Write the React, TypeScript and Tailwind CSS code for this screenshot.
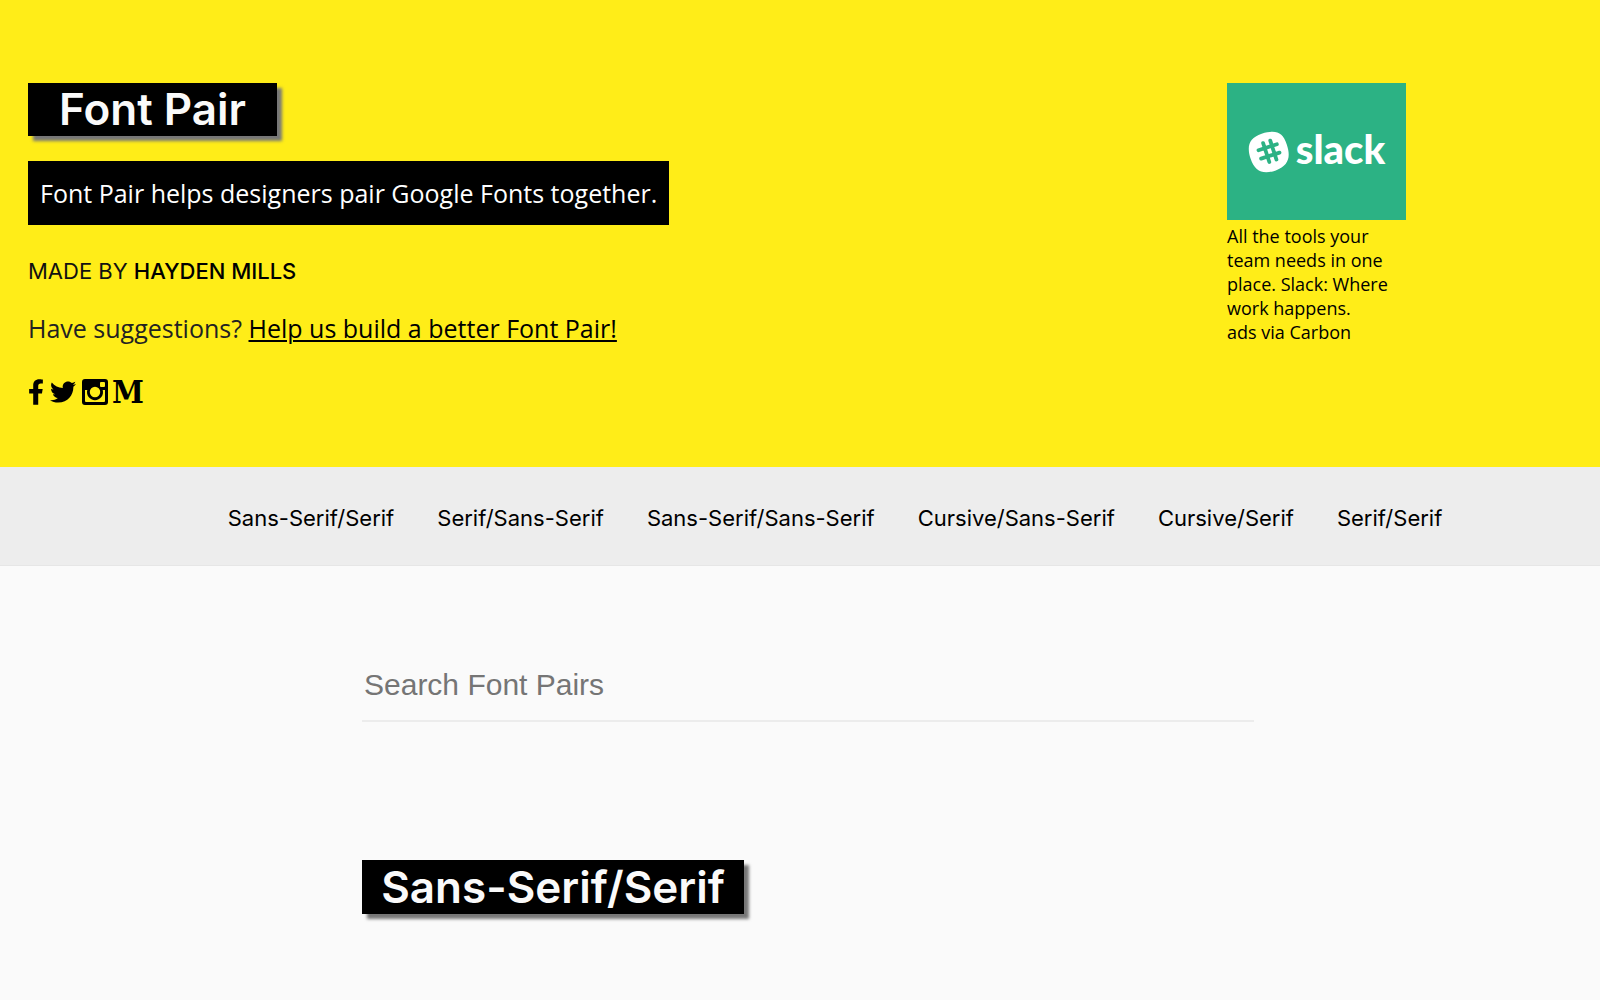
import React from 'react';
import { FaFacebookF, FaTwitter } from 'react-icons/fa';

const categories = [
  'Sans-Serif/Serif',
  'Serif/Sans-Serif',
  'Sans-Serif/Sans-Serif',
  'Cursive/Sans-Serif',
  'Cursive/Serif',
  'Serif/Serif',
];

const InstagramIcon: React.FC = () => (
  <svg viewBox="0 0 26 26" className="w-[26px] h-[26px]" fill="currentColor" aria-hidden="true">
    <path
      fillRule="evenodd"
      d="M3 0h20a3 3 0 0 1 3 3v20a3 3 0 0 1-3 3H3a3 3 0 0 1-3-3V3a3 3 0 0 1 3-3Zm16 3a1 1 0 0 0-1 1v3a1 1 0 0 0 1 1h3a1 1 0 0 0 1-1V4a1 1 0 0 0-1-1h-3ZM3 11v11a1 1 0 0 0 1 1h18a1 1 0 0 0 1-1V11h-2.300a8 8 0 1 1-15.400 0H3Zm10-3.200a5.200 5.200 0 1 0 0 10.400 5.200 5.200 0 0 0 0-10.400Z"
    />
  </svg>
);

const SlackMark: React.FC = () => (
  <svg viewBox="0 0 40 40" className="w-[42px] h-[42px] shrink-0" aria-hidden="true">
    <path
      fill="#fff"
      d="M13 2.500C27-1.500 33 1 37 13s1.500 20-10.500 24.500S6.500 38.500 2.500 26.500 1 6.500 13 2.500Z"
    />
    <path
      stroke="#2cb284"
      strokeWidth="3.600"
      strokeLinecap="round"
      d="M14.400 11.500l5.900 18M21.200 9.200l5.900 18M10 18.300l17.500-5.700M12.500 26.300l17.500-5.700"
    />
  </svg>
);

const App: React.FC = () => {
  return (
    <div className="min-h-screen bg-[#fafafa] text-black font-['Open_Sans',sans-serif]">
      {/* Header */}
      <header className="bg-[#ffed18] h-[467px] pt-[83px] pl-7 flex justify-between">
        <div className="flex flex-col items-start">
          <h1 className="w-[249px] text-center bg-black text-[#fafafa] h-[53px] leading-[53px] text-[44px] font-semibold font-[Inter,sans-serif] shadow-[5px_5px_3px_#777]">
            Font Pair
          </h1>
          <p className="mt-[25px] bg-black text-white px-3 h-16 leading-[64px] text-[25px]">
            Font Pair helps designers pair Google Fonts together.
          </p>
          <p className="mt-[31px] leading-[30px] text-[22px] font-[Inter,sans-serif] text-[#111]">
            MADE BY{' '}
            <a href="#hayden" className="font-medium text-black">
              HAYDEN MILLS
            </a>
          </p>
          <p className="mt-6 leading-9 text-[25px] text-[#222]">
            Have suggestions?{' '}
            <a href="#suggest" className="text-black underline decoration-2 underline-offset-2">
              Help us build a better Font Pair!
            </a>
          </p>
          <div className="mt-8 flex items-center gap-1.5">
            <a href="#facebook" aria-label="Facebook">
              <FaFacebookF className="w-4 h-7" />
            </a>
            <a href="#twitter" aria-label="Twitter">
              <FaTwitter className="w-[26px] h-[26px]" />
            </a>
            <a href="#instagram" aria-label="Instagram">
              <InstagramIcon />
            </a>
            <a
              href="#medium"
              aria-label="Medium"
              className="-ml-0.5 leading-7 text-[32px] font-bold font-['DejaVu_Serif_Condensed','DejaVu_Serif',serif]"
            >
              M
            </a>
          </div>
        </div>

        {/* Sponsor */}
        <aside className="w-[179px] mr-[194px] text-[18px] leading-6">
          <a href="#slack" className="block">
            <div className="bg-[#2cb284] h-[137px] mb-1 flex items-center justify-center gap-1.5 text-white">
              <SlackMark />
              <span className="pb-1.5 text-[40px] leading-10 font-black font-[Lato,sans-serif]">slack</span>
            </div>
            All the tools your team needs in one place. Slack: Where work happens.
          </a>
          <a href="#carbon" className="block">
            ads via Carbon
          </a>
        </aside>
      </header>

      {/* Category links */}
      <nav className="h-[99px] pl-[70px] pt-1 bg-[#ededed] border-b border-[#e6e6e6] flex items-center justify-center gap-[43px] text-[22px] font-[Inter,sans-serif]">
        {categories.map((name) => (
          <a key={name} href={`#${name}`} className="whitespace-nowrap">
            {name}
          </a>
        ))}
      </nav>

      <main className="ml-[362px] mr-[346px] pt-[85px]">
        <input
          type="text"
          aria-label="Search Font Pairs"
          placeholder="Search Font Pairs"
          className="w-full h-[71px] px-0.5 pb-0.5 border-b-2 border-[#ececec] bg-transparent outline-none text-[30px] font-['Liberation_Sans',sans-serif] placeholder:text-[#757575]"
        />
        <h2 className="mt-[138px] w-[382px] text-center bg-black text-[#fafafa] h-[54px] leading-[54px] text-[44px] font-semibold font-[Inter,sans-serif] shadow-[5px_5px_3px_#777]">
          Sans-Serif/Serif
        </h2>
      </main>
    </div>
  );
};

export default App;
